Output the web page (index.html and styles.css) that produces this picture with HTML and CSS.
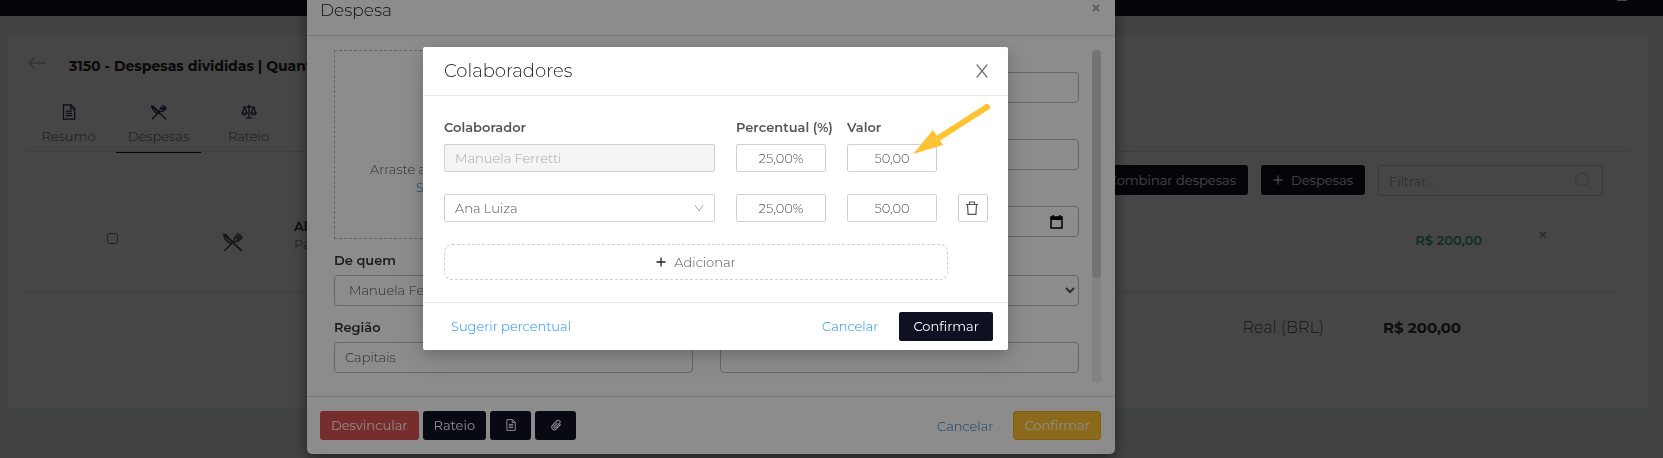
FILE: index.html
```html
<!doctype html>
<html lang="pt-BR">
<head>
    <meta charset="utf-8">
    <title>Despesas</title>
    <link rel="stylesheet" href="styles.css">
</head>

<body>

<!-- shared icons -->
<svg class="sprite" aria-hidden="true">
    <symbol id="i-file" viewBox="0 0 16 16">
        <path d="M2.500 .8h7.500l3.700 3.700v10.700H2.500z M9.700 1v3.800h3.800 M5 7.200h6 M5 9.400h6 M5 11.600h6" fill="none" stroke="currentColor" stroke-width="1.300"/>
    </symbol>
    <symbol id="i-food" viewBox="0 0 20 20">
        <path d="M1 19 L11.500 9 M19 19 L1 2.500 C.6 5 2 7 4.500 9.200 L7.500 12 L10 10.500 M2 2.200 L11 11" fill="none" stroke="currentColor" stroke-width="1.700"/>
        <path d="M11 9.500 C10.500 7 11.500 5 15.500 1 M13 6.500 L17.500 2.300 M13.800 7.500 L19 3.500 M11 9.500 C14 10.500 16 8.500 19.600 5.200" fill="none" stroke="currentColor" stroke-width="1.500"/>
    </symbol>
    <symbol id="i-scale" viewBox="0 0 16 16">
        <path d="M8 1v13 M4.500 14h7 M2 3.500l2-.5h8l2 .5 M3.500 3.500L1 9h5zM12.500 3.500L10 9h5z M1 9c.3 2.400 4.700 2.400 5 0 M10 9c.3 2.400 4.700 2.400 5 0" fill="none" stroke="currentColor" stroke-width="1.200"/>
        <circle cx="8" cy="2.500" r="1.300" fill="currentColor"/>
    </symbol>
    <symbol id="i-x" viewBox="0 0 8 8">
        <path d="M1 1l6 6M7 1L1 7" fill="none" stroke="currentColor" stroke-width="1.800"/>
    </symbol>
    <symbol id="i-plus" viewBox="0 0 10 10">
        <path d="M5 .5v9M.5 5h9" fill="none" stroke="currentColor" stroke-width="1.300"/>
    </symbol>
</svg>

<header class="topbar"><span class="avatar"></span></header>

<main class="panel">
    <div class="title-row">
        <svg class="back" viewBox="0 0 18 14"><path d="M7 1L1 7l6 6M1 7h17" fill="none" stroke="currentColor" stroke-width="1.500"/></svg>
        <h1>3150 - Despesas divididas | Quantidade</h1>
    </div>

    <nav class="tabs">
        <a href="#"><svg><use href="#i-file"/></svg>Resumo</a>
        <a href="#" class="active"><svg><use href="#i-food"/></svg>Despesas</a>
        <a href="#"><svg><use href="#i-scale"/></svg>Rateio</a>
    </nav>

    <div class="toolbar">
        <button class="btn dark" type="button">Combinar despesas</button>
        <button class="btn dark" type="button"><svg class="plus"><use href="#i-plus"/></svg>Despesas</button>
        <div class="filter">
            <input type="text" placeholder="Filtrar..." aria-label="Filtrar">
            <svg viewBox="0 0 18 18"><circle cx="8" cy="7.500" r="6.500" fill="none" stroke="currentColor" stroke-width="1.500"/><path d="M12.500 12.500l5 5" stroke="currentColor" stroke-width="1.500"/></svg>
        </div>
    </div>

    <div class="expense">
        <input type="checkbox" aria-label="Alimentação">
        <svg class="food"><use href="#i-food"/></svg>
        <div class="info"><b>Alimentação</b><span>Pago</span></div>
        <strong class="amount">R$ 200,00</strong>
        <button type="button" class="icon-btn remove" aria-label="Remover"><svg><use href="#i-x"/></svg></button>
    </div>

    <div class="total">
        <span>Real (BRL)</span>
        <strong>R$ 200,00</strong>
    </div>
</main>

<div class="backdrop">
    <section class="modal">
        <header class="modal-header">
            <h2>Despesa</h2>
            <button type="button" class="icon-btn" aria-label="Fechar"><svg><use href="#i-x"/></svg></button>
        </header>
        <div class="modal-body">
            <form class="form">
                <div class="dropzone">
                    <span>Arraste aqui</span>
                    <a href="#">Selecione</a>
                </div>
                <div class="stack">
                    <div class="field plain"><input type="text" aria-label="Descrição"></div>
                    <div class="field plain"><input type="text" aria-label="Valor"></div>
                    <div class="field plain"><div class="date">
                        <input type="text" aria-label="Data">
                        <svg viewBox="0 0 13 14"><path d="M1 2h11v11H1z" fill="none" stroke="currentColor" stroke-width="1.500"/><path d="M1 2h11v3H1zM2.500 0h1.500v2H2.500zM9 0h1.500v2H9z" fill="currentColor"/></svg>
                    </div></div>
                </div>
                <div class="field">
                    <label for="quem">De quem</label>
                    <select id="quem"><option>Manuela Ferretti</option></select>
                </div>
                <div class="field plain"><select aria-label="Tipo"><option></option></select></div>
                <div class="field">
                    <label for="regiao">Região</label>
                    <input id="regiao" type="text" value="Capitais">
                </div>
                <div class="field plain"><input type="text" aria-label="Observação"></div>
            </form>
            <div class="scroll"><div class="thumb"></div></div>
        </div>
        <footer class="modal-footer">
            <button class="btn danger" type="button">Desvincular</button>
            <button class="btn dark" type="button">Rateio</button>
            <button class="btn dark square" type="button" aria-label="Recibo"><svg><use href="#i-file"/></svg></button>
            <button class="btn dark square" type="button" aria-label="Anexo"><svg viewBox="0 0 14 14"><path d="M12.500 6.200L7.300 11.600C4.500 14.200 .2 10.700 2.900 7.500L8 2.200C10 .3 13.200 2.900 11.200 5.200L6.600 10C5.200 11.200 3.600 9.700 4.900 8.300L8.700 4.400" fill="none" stroke="currentColor" stroke-width="1.300"/></svg></button>
            <a href="#" class="cancel">Cancelar</a>
            <button class="btn warning" type="button">Confirmar</button>
        </footer>
    </section>
</div>

<div class="backdrop top">
    <section class="dialog">
        <header class="dialog-header">
            <h2>Colaboradores</h2>
            <button type="button" class="icon-btn" aria-label="Fechar"><svg viewBox="0 0 12 14"><path d="M.7 .5l10.600 13M11.300 .5L.7 13.500" fill="none" stroke="currentColor" stroke-width="1.300"/></svg></button>
        </header>
        <div class="dialog-body">
            <div class="split head">
                <span id="h-col">Colaborador</span>
                <span id="h-pct">Percentual (%)</span>
                <span id="h-val">Valor</span>
            </div>
            <div class="split">
                <input class="person" type="text" value="Manuela Ferretti" disabled aria-labelledby="h-col">
                <input type="text" value="25,00%" aria-labelledby="h-pct">
                <input type="text" value="50,00" aria-labelledby="h-val">
            </div>
            <div class="split">
                <select class="person" aria-labelledby="h-col"><option>Ana Luiza</option></select>
                <input type="text" value="25,00%" aria-labelledby="h-pct">
                <input type="text" value="50,00" aria-labelledby="h-val">
                <button class="trash" type="button" aria-label="Excluir"><svg viewBox="0 0 12 14"><path d="M0 3.500h12M3.500 3.300V1h5v2.300M1.500 3.700l.6 9.600h7.800l.6-9.600" fill="none" stroke="currentColor" stroke-width="1.200"/></svg></button>
            </div>
            <button class="add" type="button"><svg class="plus"><use href="#i-plus"/></svg>Adicionar</button>
        </div>
        <footer class="dialog-footer">
            <a href="#">Sugerir percentual</a>
            <a href="#" class="cancel">Cancelar</a>
            <button class="btn dark" type="button">Confirmar</button>
        </footer>
        <svg class="pointer" viewBox="0 0 78 52"><path d="M74 5L24 37" stroke="#ffc233" stroke-width="6" stroke-linecap="round"/><path d="M0 52L20 28L30 43z" fill="#ffc233"/></svg>
    </section>
</div>

</body>
</html>
```

FILE: styles.css
```css
* {
    box-sizing: border-box;
}

body {
    margin: 0;
    min-height: 100vh;
    overflow: hidden;
    background: #f0f2f5;
    color: #555;
    font: 300 13px/18px Montserrat, Inter, "Open Sans", sans-serif;
}

h1, h2 {
    margin: 0;
}

input, select, button {
    font: inherit;
    color: inherit;
}

a {
    color: #1890ff;
    text-decoration: none;
}

svg {
    flex: none;
}

.sprite {
    display: none;
}

/* page */
.topbar {
    height: 16px;
    background: #0f1123;
    display: flex;
    justify-content: flex-end;
    align-items: flex-start;
    padding-right: 36px;
}

.avatar {
    width: 10px;
    height: 1px;
    background: #fff;
}

.panel {
    margin: 18px 15px 50px 7px;
    padding: 19px 18px 70px 19px;
    background: #fff;
}

.title-row {
    display: flex;
    align-items: center;
    gap: 23px;
    height: 26px;
}

.title-row h1 {
    font-size: 14px;
    font-weight: 700;
    color: #222;
}

.back {
    width: 18px;
    height: 14px;
    margin: 0 0 6px 2px;
    color: #bbb;
}

.tabs {
    display: flex;
    gap: 5px;
    margin-top: 17px;
    border-bottom: 1px solid #e8e8e8;
}

.tabs a {
    display: flex;
    flex-direction: column;
    align-items: center;
    gap: 7px;
    width: 85px;
    height: 57px;
    padding-top: 8px;
    margin-bottom: -2px;
    color: #545b6c;
}

.tabs a.active {
    border-bottom: 1px solid #0f1123;
}

.tabs svg {
    width: 16px;
    height: 16px;
    color: #2a2e4c;
}

.toolbar {
    display: flex;
    justify-content: flex-end;
    gap: 13px;
    margin: 13px 27px 0 0;
}

.btn {
    display: inline-flex;
    align-items: center;
    justify-content: center;
    height: 29px;
    padding: 0 11px 1px;
    border: 0;
    border-radius: 3px;
    color: #fff;
    font-weight: 400;
}

.dark {
    background: #0f1123;
}

.toolbar .btn {
    height: 30px;
    padding: 0 12px;
}

.plus {
    width: 10px;
    height: 10px;
    margin-right: 8px;
}

.filter {
    display: flex;
    align-items: center;
    width: 225px;
    height: 31px;
    padding: 0 10px;
    border: 1px solid #ccc;
    border-radius: 3px;
}

.filter input {
    flex: 1;
    min-width: 0;
    border: 0;
    padding: 0;
    background: none;
}

.filter input::placeholder {
    color: #888;
}

.filter svg {
    width: 18px;
    height: 18px;
    color: #ddd;
}

.expense {
    display: flex;
    align-items: flex-start;
    height: 96px;
    margin-right: 14px;
    padding: 21px 69px 0 81px;
    border-bottom: 1px solid #e4e4e4;
}

.expense input {
    width: 11px;
    height: 11px;
    margin: 16px 105px 0 0;
}

.food {
    width: 20px;
    height: 20px;
    margin: 15px 51px 0 0;
}

.info {
    display: flex;
    flex-direction: column;
    flex: 1;
}

.info b {
    font-weight: 600;
    color: #222;
}

.amount {
    margin: 14px 57px 0 0;
    font-weight: 600;
    color: #3f9f80;
}

.total {
    display: flex;
    justify-content: flex-end;
    gap: 59px;
    margin-top: 26px;
    padding-right: 169px;
    font-size: 16px;
    line-height: 20px;
}

.total strong {
    font-size: 15px;
    font-weight: 700;
    color: #333;
}

/* expense modal */
.backdrop {
    position: fixed;
    inset: 0;
    display: flex;
    justify-content: center;
    align-items: flex-start;
    padding-right: 241px;
    background: rgba(0, 0, 0, .5);
}

.modal {
    width: 808px;
    background: #fff;
    border-radius: 0 0 5px 5px;
    box-shadow: 0 5px 15px rgba(0, 0, 0, .5);
}

.modal a {
    color: #337ab7;
}

.modal-header {
    display: flex;
    justify-content: space-between;
    align-items: flex-start;
    padding: 0 15px 15px 13px;
    border-bottom: 1px solid #ddd;
}

.modal-header h2 {
    font-size: 17px;
    font-weight: 300;
    line-height: 20px;
    color: #222;
}

.icon-btn {
    display: flex;
    padding: 0;
    border: 0;
    background: none;
    color: #777;
}

.modal-header .icon-btn, .remove {
    color: #aaa;
}

.modal-header svg, .remove svg {
    width: 8px;
    height: 8px;
}

.modal-header svg {
    margin-top: 4px;
}

.remove svg {
    margin-top: 14px;
}

.modal-body {
    display: flex;
    gap: 13px;
    padding: 14px 14px 13px 27px;
    border-bottom: 1px solid #ddd;
}

.form {
    flex: 1;
    display: grid;
    grid-template-columns: 1fr 1fr;
    gap: 14px 27px;
    padding-bottom: 10px;
}

.dropzone {
    display: flex;
    flex-direction: column;
    height: 189px;
    padding: 109px 0 0 35px;
    border: 1px dashed #bbb;
}

.dropzone a {
    padding-left: 46px;
}

.stack {
    display: flex;
    flex-direction: column;
    gap: 14px;
}

.field {
    display: flex;
    flex-direction: column;
    gap: 8px;
}

.field label {
    font-weight: 600;
    line-height: 14px;
    color: #333;
}

.plain {
    padding-top: 22px;
}

.field input, .field select {
    width: 100%;
    height: 31px;
    padding: 0 10px 1px;
    border: 1px solid #bbb;
    border-radius: 4px;
    background: #fff;
}

.date {
    display: flex;
    align-items: center;
    height: 31px;
    padding-right: 15px;
    border: 1px solid #bbb;
    border-radius: 4px;
}

.field .date input {
    height: 28px;
    border: 0;
}

.date svg {
    width: 13px;
    height: 14px;
    color: #000;
}

.scroll {
    width: 9px;
    border-radius: 4px;
    background: #ededed;
}

.thumb {
    height: 228px;
    border-radius: 4px;
    background: #d2d2d2;
}

.modal-footer {
    display: flex;
    align-items: center;
    gap: 4px;
    padding: 14px 14px 14px 13px;
}

.square {
    width: 41px;
}

.square svg {
    width: 12px;
    height: 12px;
}

.cancel {
    margin-left: auto;
}

.modal-footer .cancel {
    margin-right: 16px;
}

.danger {
    background: #d9534f;
}

.modal-footer .warning {
    padding: 0 10px 1px;
    background: #ffc233;
    border: 1px solid #f0ad1e;
}

/* collaborators dialog */
.top {
    padding: 47px 232px 0 0;
    background: rgba(0, 0, 0, .45);
}

.dialog {
    position: relative;
    width: 585px;
    background: #fff;
    border-radius: 2px;
    box-shadow: 0 4px 12px rgba(0, 0, 0, .15), 0 9px 28px rgba(0, 0, 0, .1);
}

.dialog-header {
    display: flex;
    align-items: center;
    justify-content: space-between;
    height: 49px;
    padding: 0 20px 1px 21px;
    border-bottom: 1px solid #ececec;
}

.dialog-header h2 {
    font-size: 18px;
    font-weight: 300;
    color: #222;
}

.dialog-header svg {
    width: 12px;
    height: 14px;
}

.dialog-body {
    padding: 22px 20px 22px 21px;
}

.split {
    display: grid;
    grid-template-columns: 1fr 90px 90px 30px;
    gap: 21px;
    margin-bottom: 22px;
}

.split.head {
    margin-bottom: 8px;
    font-weight: 600;
    white-space: nowrap;
}

.split input, .split select {
    width: 100%;
    height: 28px;
    padding: 0 0 1px;
    border: 1px solid #d0d0d0;
    border-radius: 2px;
    background: #fff;
    text-align: center;
}

.split .person {
    padding: 0 10px 1px;
    text-align: left;
}

.split .person:disabled {
    background: #f5f5f5;
    color: #aaa;
}

.split select {
    appearance: none;
    background: #fff url("data:image/svg+xml,%3Csvg xmlns='http://www.w3.org/2000/svg' width='10' height='8'%3E%3Cpath d='M1 1l4 6 4-6' fill='none' stroke='%23aaa'/%3E%3C/svg%3E") no-repeat right 10px center;
}

.trash {
    display: flex;
    align-items: center;
    justify-content: center;
    padding: 0 2px 1px 0;
    border: 1px solid #d0d0d0;
    border-radius: 2px;
    background: #fff;
}

.trash svg {
    width: 12px;
    height: 14px;
}

.add {
    display: flex;
    align-items: center;
    justify-content: center;
    width: calc(100% - 40px);
    height: 36px;
    border: 1px dashed #d0d0d0;
    border-radius: 8px;
    background: #fff;
}

.add svg {
    color: #222;
}

.dialog-footer {
    display: flex;
    align-items: center;
    gap: 21px;
    padding: 9px 15px 9px 28px;
    border-top: 1px solid #ececec;
}

.dialog-footer a {
    padding-bottom: 1px;
}

.dialog-footer .btn {
    padding: 0 14px 1px;
    border-radius: 2px;
}

/* arrow drawn over the value column */
.pointer {
    position: absolute;
    top: 55px;
    right: 17px;
    width: 78px;
    height: 52px;
}
```
